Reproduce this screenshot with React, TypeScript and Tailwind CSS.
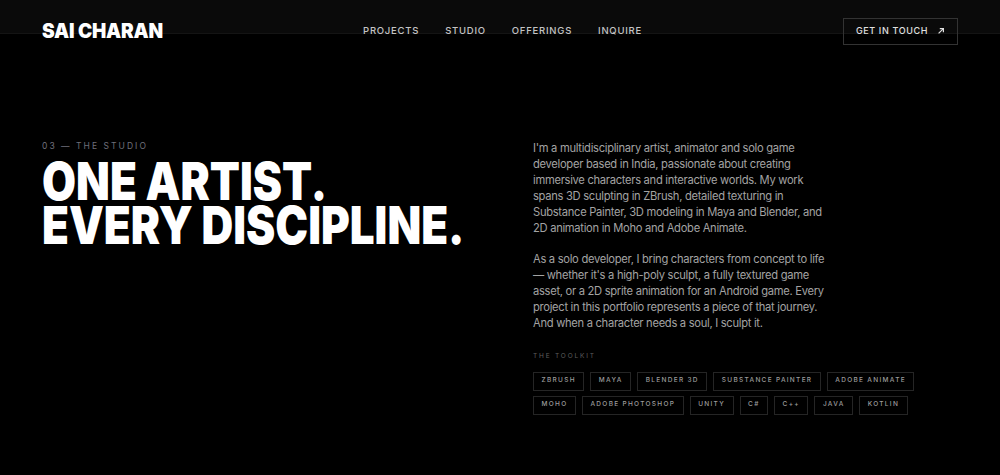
import React from 'react';

const NAV = ['Projects', 'Studio', 'Offerings', 'Inquire'];

const TOOLS = [
  'ZBrush',
  'Maya',
  'Blender 3D',
  'Substance Painter',
  'Adobe Animate',
  'Moho',
  'Adobe Photoshop',
  'Unity',
  'C#',
  'C++',
  'Java',
  'Kotlin',
];

const ArrowUpRight = () => (
  <svg width="8" height="8" viewBox="0 0 10 10" fill="none" stroke="currentColor" strokeWidth="1.5">
    <path d="M2 8 L8 2" />
    <path d="M3.5 2 H8 V6.5" />
  </svg>
);

const Header: React.FC = () => (
  <header className="relative h-[62px] px-[42px] flex items-center justify-between">
    <div className="absolute inset-x-0 top-0 h-[34px] bg-[#0a0a0a] border-b border-[#141414]" />
    <div className="relative w-[120px] h-[20px] flex items-center">
      <span className="origin-left scale-x-[0.93] whitespace-nowrap text-[20.5px] font-black tracking-[-0.2px] text-white leading-none">
        SAI CHARAN
      </span>
    </div>
    <nav className="relative flex items-center gap-[26px]">
      {NAV.map((item) => (
        <a key={item} className="text-[9.5px] font-medium uppercase tracking-[0.08em] text-[#c4c4c4]">
          {item}
        </a>
      ))}
    </nav>
    <button className="relative h-[27px] w-[115px] border border-[#333] flex items-center justify-center gap-[9px] text-[9px] font-medium uppercase tracking-[0.07em] text-[#e0e0e0]">
      Get in touch
      <ArrowUpRight />
    </button>
  </header>
);

const Studio: React.FC = () => (
  <main className="px-[42px] pt-[78px] grid grid-cols-2 gap-x-[66px]">
    <div>
      <p className="text-[8.5px] uppercase tracking-[0.24em] text-[#6f6f7a]">03 — The Studio</p>
      <h1 className="mt-[7px] origin-left scale-x-[0.845] whitespace-nowrap text-[52px] font-black leading-[44px] text-white uppercase">
        One artist.
        <br />
        Every discipline.
      </h1>
    </div>
    <div>
      <div className="max-w-[296px] text-[11.2px] leading-[16px] tracking-[-0.3px] text-[#a3a3a3] space-y-[15px]">
        <p>
          I'm a multidisciplinary artist, animator and solo game developer based in India, passionate about creating
          immersive characters and interactive worlds. My work spans 3D sculpting in ZBrush, detailed texturing in
          Substance Painter, 3D modeling in Maya and Blender, and 2D animation in Moho and Adobe Animate.
        </p>
        <p>
          As a solo developer, I bring characters from concept to life — whether it's a high-poly sculpt, a fully
          textured game asset, or a 2D sprite animation for an Android game. Every project in this portfolio represents
          a piece of that journey. And when a character needs a soul, I sculpt it.
        </p>
      </div>
      <p className="mt-[21px] text-[6.5px] uppercase tracking-[0.28em] text-[#5e5e5e]">The Toolkit</p>
      <div className="mt-[10px] max-w-[400px] flex flex-wrap gap-x-[6px] gap-y-[5px]">
        {TOOLS.map((t) => (
          <span
            key={t}
            className="h-[19px] px-[7.5px] flex items-center border border-[#252525] text-[6.5px] font-medium uppercase tracking-[0.2em] text-[#9c9c9c]"
          >
            {t}
          </span>
        ))}
      </div>
    </div>
  </main>
);

export default function App() {
  return (
    <div className="min-h-[475px] bg-black text-white" style={{ fontFamily: 'Inter, "Liberation Sans", sans-serif' }}>
      <Header />
      <Studio />
    </div>
  );
}
